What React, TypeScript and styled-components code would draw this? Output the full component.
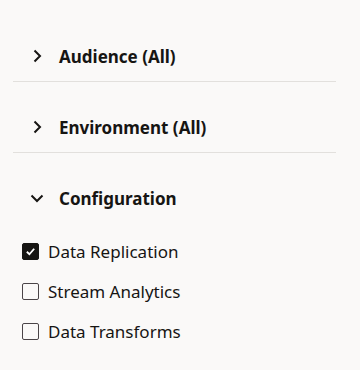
import React, { useState } from 'react';
import styled, { createGlobalStyle } from 'styled-components';

const GlobalStyle = createGlobalStyle`
  html, body {
    margin: 0;
    padding: 0;
    background: #faf9f8;
  }
  body {
    font-family: 'Noto Sans', 'Open Sans', sans-serif;
    color: #161513;
  }
`;

const Panel = styled.div`
  width: 360px;
  height: 370px;
  box-sizing: border-box;
  padding: 11px 24px 0 13px;
  background: #faf9f8;
`;

const Section = styled.div<{ $last?: boolean }>`
  padding-top: 20px;
  border-bottom: ${(p) => (p.$last ? 'none' : '1px solid #e2e0dd')};
`;

const Header = styled.button`
  display: flex;
  align-items: center;
  gap: 14px;
  width: 100%;
  height: 50px;
  padding: 0 0 0 16px;
  border: 0;
  background: none;
  cursor: pointer;
  font-family: inherit;
  font-size: 17px;
  font-weight: 700;
  color: #161513;
  text-align: left;
`;

const Chevron = styled.svg<{ $open?: boolean }>`
  width: 16px;
  height: 16px;
  flex: none;
  transform: rotate(${(p) => (p.$open ? 90 : 0)}deg);
`;

const Options = styled.div`
  display: flex;
  flex-direction: column;
  gap: 18px;
  padding: 17px 0 0 9px;
`;

const OptionRow = styled.label`
  display: flex;
  align-items: center;
  gap: 9px;
  height: 22px;
  font-size: 17px;
  color: #161513;
  cursor: pointer;
`;

const Box = styled.span<{ $checked?: boolean }>`
  width: 17px;
  height: 17px;
  box-sizing: border-box;
  border-radius: 2px;
  border: 1.5px solid ${(p) => (p.$checked ? '#161513' : '#4a4447')};
  background: ${(p) => (p.$checked ? '#161513' : 'transparent')};
  display: flex;
  align-items: center;
  justify-content: center;
  flex: none;
`;

const sections = [
  { title: 'Audience (All)' },
  { title: 'Environment (All)' },
  { title: 'Configuration', open: true },
];

const options = ['Data Replication', 'Stream Analytics', 'Data Transforms'];

export default function App() {
  const [checked, setChecked] = useState<Record<string, boolean>>({ 'Data Replication': true });

  return (
    <>
      <GlobalStyle />
      <Panel>
        {sections.map((s, i) => (
          <Section key={s.title} $last={i === sections.length - 1}>
            <Header>
              <Chevron $open={s.open} viewBox="0 0 16 16">
                <path d="M5.5 2.5 L11 8 L5.5 13.5" fill="none" stroke="#161513" strokeWidth="2" />
              </Chevron>
              {s.title}
            </Header>
            {s.open && (
              <Options>
                {options.map((o) => (
                  <OptionRow key={o} onClick={() => setChecked({ ...checked, [o]: !checked[o] })}>
                    <Box $checked={checked[o]}>
                      {checked[o] && (
                        <svg width="11" height="11" viewBox="0 0 12 12">
                          <path d="M2 6.3 L4.8 9 L10 3" fill="none" stroke="#fff" strokeWidth="2" />
                        </svg>
                      )}
                    </Box>
                    {o}
                  </OptionRow>
                ))}
              </Options>
            )}
          </Section>
        ))}
      </Panel>
    </>
  );
}
